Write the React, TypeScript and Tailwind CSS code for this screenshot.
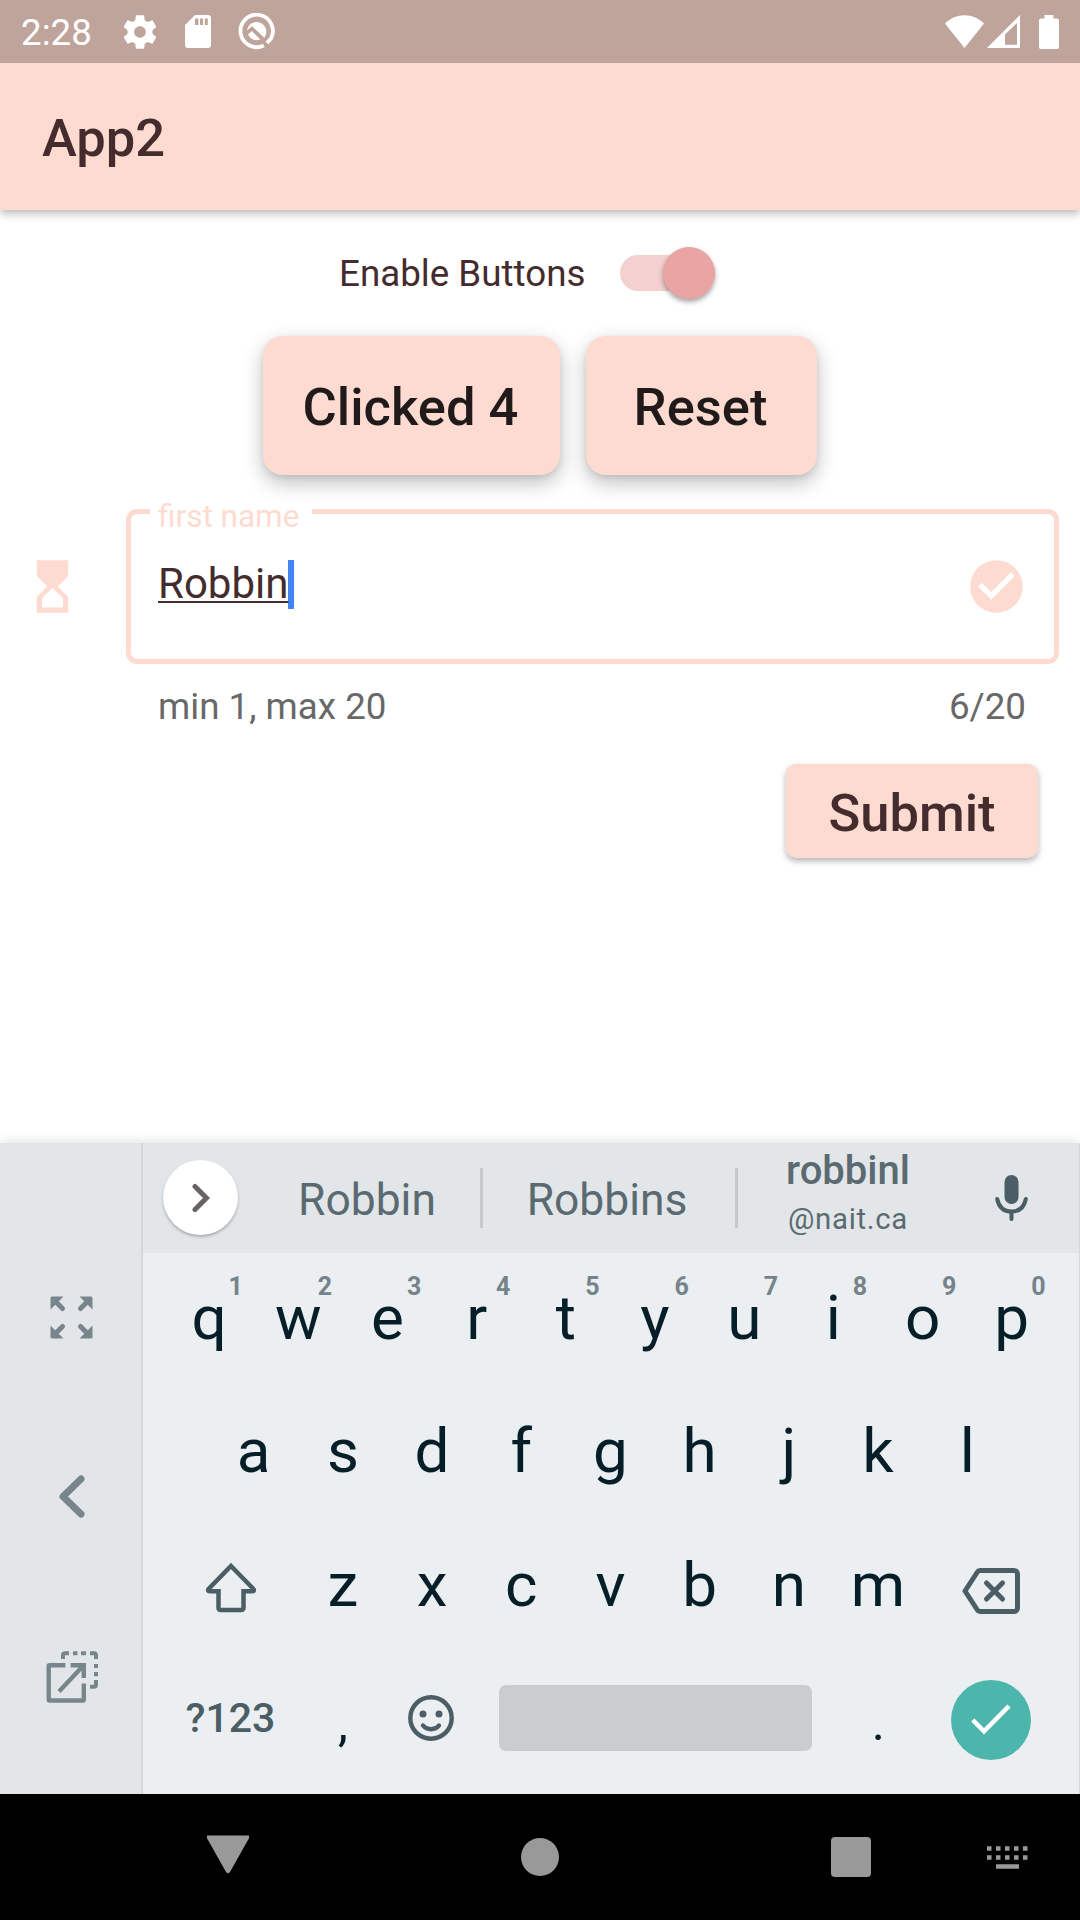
import React from "react";
import { MdHourglassTop, MdCheckCircle } from "react-icons/md";

function StatusBar() {
  return (
    <header className="relative z-10 flex h-[63px] items-center bg-[#bfa49c] text-white">
      <span className="ml-[21px] w-[99px] pt-[3px] text-[36.75px] leading-[44px]">2:28</span>
      <svg className="size-[40px]" viewBox="0 0 24 24" fill="currentColor">
        <path d="M19.430 12.980c.04-.32.07-.64.07-.98s-.03-.66-.07-.98l2.110-1.650c.19-.15.24-.42.12-.64l-2-3.460c-.12-.22-.39-.3-.61-.22l-2.490 1c-.52-.4-1.080-.73-1.690-.98l-.38-2.650C14.460 2.180 14.250 2 14 2h-4c-.25 0-.46.18-.49.42l-.38 2.650c-.61.25-1.170.59-1.690.98l-2.490-1c-.23-.09-.49 0-.61.22l-2 3.460c-.13.22-.07.49.12.64l2.110 1.650c-.04.32-.07.65-.07.98s.03.66.07.98l-2.110 1.650c-.19.15-.24.42-.12.64l2 3.460c.12.22.39.3.61.22l2.490-1c.52.4 1.080.73 1.690.98l.38 2.650c.03.24.24.42.49.42h4c.25 0 .46-.18.49-.42l.38-2.650c.61-.25 1.170-.59 1.690-.98l2.490 1c.23.09.49 0 .61-.22l2-3.460c.12-.22.07-.49-.12-.64l-2.110-1.650zM12 15.500c-1.930 0-3.500-1.570-3.500-3.500s1.570-3.500 3.500-3.500 3.500 1.570 3.500 3.500-1.570 3.500-3.500 3.500z" />
      </svg>
      <svg className="ml-[25px] h-[33px] w-[26px]" viewBox="0 0 26 33" fill="currentColor">
        <path fillRule="evenodd" d="M10 0H23a3 3 0 0 1 3 3V30a3 3 0 0 1-3 3H3a3 3 0 0 1-3-3V10ZM10 3.500V10h3.400V3.500ZM15 3.500V10h3V3.500ZM19.800 3.500V10h3V3.500Z" />
      </svg>
      <svg className="ml-[27px] size-[37px]" viewBox="0 0 37 37" fill="none" stroke="currentColor" strokeWidth="3.800">
        <path d="M25.800 32.500A16.200 16.200 0 1 1 33 25.500L29 30" />
        <path d="M9 17.500A9.700 9.700 0 1 1 26.300 24.700L14 13.200Z" fill="currentColor" stroke="none" />
        <path d="M10 21.500L13.800 18 22.300 26.600A9.700 9.700 0 0 1 10 21.500Z" fill="currentColor" stroke="none" />
      </svg>
      <div className="ml-auto flex items-center pr-[21px]">
        <svg className="h-[33px] w-[39px]" viewBox="0 0 39 33" fill="currentColor"><path d="M0 8.500C11-2.500 28-2.500 39 8.500L19.500 33Z" /></svg>
        <svg className="ml-[3px] h-[33px] w-[33px]" viewBox="0 0 33 33" fill="currentColor"><path fillRule="evenodd" d="M33 0V33H0ZM30 8L18 19.500V29.700H30Z" /></svg>
        <svg className="ml-[19px] h-[34px] w-[20px]" viewBox="0 0 20 34" fill="currentColor"><path d="M5.500 0h9v3.500H18a2 2 0 0 1 2 2V32a2 2 0 0 1-2 2H2a2 2 0 0 1-2-2V5.500a2 2 0 0 1 2-2h3.500Z" /></svg>
      </div>
    </header>
  );
}

function Form() {
  return (
    <main className="h-[933px]">
      <div className="flex h-[126px] items-center pl-[339px]">
        <span className="w-[281px] pt-[2px] text-[36.75px] leading-[44px] whitespace-nowrap">Enable Buttons</span>
        <div className="flex h-[36px] w-[95px] items-center justify-end rounded-full bg-[#f4d0d0]">
          <div className="size-[52px] shrink-0 rounded-full bg-[#eaa4a4] shadow-[0_3px_5px_rgba(0,0,0,0.35)]" />
        </div>
      </div>
      <div className="flex h-[139px] gap-[26px] pl-[263px] text-[52.5px] font-medium text-[#201b1a]">
        <button className="w-[297px] rounded-[20px] bg-[#fedbd0] pt-[3px] pr-[2px] shadow-[0_8px_20px_rgba(0,0,0,0.25),0_2px_6px_rgba(0,0,0,0.08)]">Clicked 4</button>
        <button className="w-[231px] rounded-[20px] bg-[#fedbd0] pt-[3px] pr-[2px] shadow-[0_8px_20px_rgba(0,0,0,0.25),0_2px_6px_rgba(0,0,0,0.08)]">Reset</button>
      </div>
      <div className="mt-[34px] flex h-[155px] items-center">
        <MdHourglassTop className="ml-[21px] size-[63px] text-[#fedbd0]" />
        <div className="relative ml-[42px] flex h-full w-[933px] items-center rounded-[11px] border-[5px] border-[#fedbd0] pl-[27px]">
          <label className="absolute top-[-6px] left-[19px] flex h-[7px] w-[162px] items-center bg-white pt-[8px] pl-[8px] text-[31.5px] leading-[7px] whitespace-nowrap text-[#fedbd0]">first name</label>
          <div className="relative -top-[2px] flex h-[49px] items-center border-r-[6px] border-[#4285f4]">
            <span className="mt-[-2px] text-[42px] leading-[49px] underline decoration-2 underline-offset-[3px] [text-decoration-skip-ink:none]">Robbin</span>
          </div>
          <MdCheckCircle className="mr-[26px] ml-auto size-[63px] text-[#fedbd0]" />
        </div>
      </div>
      <div className="mt-[21px] flex h-[44px] justify-between pr-[54px] pl-[158px] text-[36.75px] leading-[44px] text-[#696868]">
        <span>min 1, max 20</span>
        <span>6/20</span>
      </div>
      <button className="mt-[35px] ml-[786px] flex h-[94px] w-[252px] items-center justify-center rounded-[10px] bg-[#fedbd0] pt-[5px] text-[52.5px] font-medium shadow-[0_3px_6px_rgba(0,0,0,0.3)]">Submit</button>
    </main>
  );
}

function SideRail() {
  return (
    <div className="flex w-[143px] flex-col items-center border-r-2 border-[#d3d7da] bg-[#e2e6e9] pt-[153px] pl-[2px] text-[#78868c]">
      <svg className="size-[43px]" viewBox="0 0 43 43" fill="none" stroke="currentColor" strokeWidth="5" strokeLinecap="round">
        <path d="M5 5l7.500 7.500M38 5l-7.500 7.500M5 38l7.500-7.500M38 38l-7.500-7.500" />
        <g fill="currentColor" stroke="none">
          <path d="M2 .5H13.500L.5 13.500V2A1.500 1.500 0 0 1 2 .5ZM41 .5H29.500L42.500 13.500V2A1.500 1.500 0 0 0 41 .5ZM2 42.500H13.500L.5 29.500V41A1.500 1.500 0 0 0 2 42.500ZM41 42.500H29.500L42.500 29.500V41A1.500 1.500 0 0 1 41 42.500Z" />
        </g>
      </svg>
      <svg className="mt-[136px] h-[43px] w-[26px]" viewBox="0 0 26 43" fill="none" stroke="currentColor" strokeWidth="7" strokeLinecap="round" strokeLinejoin="round"><path d="M22 4L4 21.500 22 39" /></svg>
      <svg className="mt-[132px] ml-px size-[54px]" viewBox="0 0 54 54" fill="none" stroke="currentColor" strokeWidth="4.400">
        <path d="M20.400 15.200H4.700a1 1 0 0 0-1 1V49.500a1 1 0 0 0 1 1H37.800a1 1 0 0 0 1-1V33.500M25.600 15.200H38.800V28M14 41.500L38 16" />
        <path strokeWidth="4" d="M18 9V5.200a2 2 0 0 1 2-2H24M28 3.200h4.500M36 3.200h5M45 3.200h4a2 2 0 0 1 2 2V9M51 14v4M51 22v4.200M51 30v4.800a2 2 0 0 1-2 2H45" />
      </svg>
    </div>
  );
}

function Suggestions() {
  return (
    <div className="flex h-[110px] bg-[#e2e6e9] text-[#5a6a70]">
      <div className="mt-[17px] ml-[20px] flex size-[75px] items-center justify-center rounded-full bg-white shadow-[0_2px_3px_rgba(0,0,0,0.25)]">
        <svg className="h-[30px] w-[18px]" viewBox="0 0 18 30" fill="none" stroke="#666362" strokeWidth="5" strokeLinecap="round"><path d="M3 3.500L14.500 15 3 26.500" /></svg>
      </div>
      <span className="mt-[30px] ml-[14px] w-[228px] pl-[2px] text-center text-[44.400px] leading-[54px]">Robbin</span>
      <div className="mt-[25px] h-[60px] w-[3px] bg-[#c5c9cb]" />
      <span className="mt-[30px] w-[252px] pr-[4px] text-center text-[44.400px] leading-[54px]">Robbins</span>
      <div className="mt-[25px] h-[60px] w-[3px] bg-[#c5c9cb]" />
      <div className="w-[220px] text-center">
        <div className="mt-[5px] text-[40px] leading-[46px] font-medium">robbinl</div>
        <div className="mt-[2px] text-[29.400px] leading-[46px] tracking-[0.700px]">@nait.ca</div>
      </div>
      <svg className="mt-[32px] ml-[37px] h-[46px] w-[33px]" viewBox="0 0 33 46" fill="none" stroke="#4b5d65" strokeWidth="4" strokeLinecap="round">
        <rect x="9.500" y="0" width="14" height="29" rx="7" fill="#4b5d65" stroke="none" />
        <path d="M2.200 24C4 33 9 36.500 16.500 36.500S29 33 30.800 24M16.500 37v7" />
      </svg>
    </div>
  );
}

function Key({ label, hint }: { label: string; hint?: string }) {
  return (
    <div className="relative w-[89.200px] text-center">
      {label}
      {hint && <span className="absolute top-[19px] left-[64px] text-[25px] leading-[30px] font-bold text-[#76838a]">{hint}</span>}
    </div>
  );
}

function Keyboard() {
  return (
    <section className="relative flex h-[651px] bg-[#ebeff2] shadow-[0_0_12px_rgba(0,0,0,0.15)]">
      <SideRail />
      <div className="w-[937px] border-r border-[#d3d7da]">
        <Suggestions />
        <div className="pl-[21.500px] text-[62px] text-[#051e28]">
          <div className="flex h-[131px] leading-[129px]">
            {"qwertyuiop".split("").map((k, i) => <Key key={k} label={k} hint={String((i + 1) % 10)} />)}
          </div>
          <div className="flex h-[134px] pl-[44.600px] leading-[134px]">
            {"asdfghjkl".split("").map((k) => <Key key={k} label={k} />)}
          </div>
          <div className="flex h-[134px] items-center leading-[134px]">
            <div className="flex w-[133.800px] justify-center">
              <svg className="mt-[5px] mr-px h-[51px] w-[52px]" viewBox="0 0 52 51" fill="none" stroke="#4b5d65" strokeWidth="4.500">
                <path d="M26 4L48 26.500c1.500 1.600 1 2.800-.8 2.800H38.500V46a2 2 0 0 1-2 2H15.500a2 2 0 0 1-2-2V29.300H4.800C3 29.300 2.500 28.100 4 26.500Z" />
              </svg>
            </div>
            {"zxcvbnm".split("").map((k) => <Key key={k} label={k} />)}
            <div className="flex w-[133.800px] justify-center">
              <svg className="mt-[11px] ml-[2px] h-[46px] w-[58px]" viewBox="0 0 58 46" fill="none" stroke="#4b5d65" strokeWidth="5" strokeLinejoin="round">
                <path d="M18 2.500H52a3.500 3.500 0 0 1 3.500 3.500V40a3.500 3.500 0 0 1-3.500 3.500H18a3 3 0 0 1-2.600-1.500L3 23 15.400 4A3 3 0 0 1 18 2.500Z" />
                <path strokeLinecap="round" d="M24.500 15L40.500 31M40.500 15L24.500 31" />
              </svg>
            </div>
          </div>
          <div className="flex h-[134px] items-center">
            <div className="w-[133.800px] pr-[2px] text-center text-[41px] font-medium text-[#4b5d65]">?123</div>
            <div className="w-[89.200px] pt-[8px] text-center text-[50px] leading-none">,</div>
            <div className="flex w-[89.200px] justify-center">
              <svg className="mr-[2px] mb-[2px] size-[46px]" viewBox="0 0 46 46" fill="none" stroke="#4b5d65" strokeWidth="4.400" strokeLinecap="round">
                <circle cx="23" cy="23" r="20.700" />
                <g fill="#4b5d65" stroke="none"><circle cx="15" cy="19" r="3.500" /><circle cx="31" cy="19" r="3.500" /></g>
                <path d="M15 30.500C19 35.500 27 35.500 31 30.500" />
              </svg>
            </div>
            <div className="mx-[22px] mb-[2px] h-[66px] w-[313px] rounded-[7px] bg-[#c9cdd0]" />
            <div className="w-[89.200px] pt-[8px] text-center text-[50px] leading-none">.</div>
            <div className="flex w-[133.800px] justify-center">
              <div className="mt-px ml-[2px] flex size-[80px] items-center justify-center rounded-full bg-[#4db6ac]">
                <svg className="h-[31px] w-[40px]" viewBox="0 0 40 31" fill="none" stroke="white" strokeWidth="4.600"><path d="M1.800 16L13 27.300 38 2" /></svg>
              </div>
            </div>
          </div>
        </div>
      </div>
    </section>
  );
}

function NavBar() {
  return (
    <nav className="flex h-[126px] items-center bg-black text-[#999]">
      <svg className="mt-[-5px] ml-[207px] h-[39px] w-[42px]" viewBox="0 0 42 39" fill="currentColor"><path d="M2 .5H40A1.800 1.800 0 0 1 41.500 4L23 37a2.300 2.300 0 0 1-4 0L.5 4A1.800 1.800 0 0 1 2 .5Z" /></svg>
      <div className="ml-[272px] size-[38px] rounded-full bg-[#999]" />
      <div className="ml-[272px] size-[40px] rounded-[4px] bg-[#999]" />
      <svg className="mt-px ml-[116px] h-[24px] w-[41px]" viewBox="0 0 41 24" fill="none" stroke="currentColor" strokeWidth="4.500">
        <path strokeDasharray="4.500 4.500" d="M0 2.500H41M0 11.500H41" />
        <path d="M9 20.500H32" />
      </svg>
    </nav>
  );
}

export default function App() {
  return (
    <div className="h-[1920px] w-[1080px] overflow-hidden bg-white font-['Roboto',sans-serif] text-[#442c2e]">
      <StatusBar />
      <div className="relative flex h-[147px] items-center bg-[#fedbd0] pt-[3px] pl-[42px] text-[52.500px] leading-[60px] font-medium shadow-[0_3px_9px_rgba(0,0,0,0.3)]">App2</div>
      <Form />
      <Keyboard />
      <NavBar />
    </div>
  );
}
